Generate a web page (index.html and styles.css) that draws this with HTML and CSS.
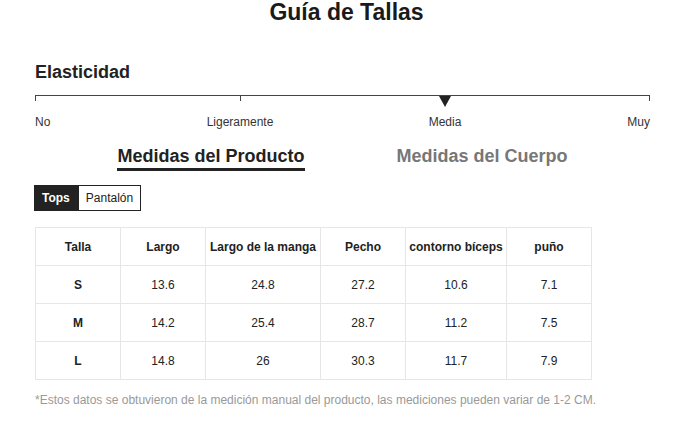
FILE: index.html
```html
<!DOCTYPE html>
<html lang="es">
<head>
<meta charset="utf-8">
<title>Guía de Tallas</title>
<link rel="stylesheet" href="styles.css">
</head>
<body>
<div class="page">
  <h1 class="title">Guía de Tallas</h1>
  <div class="content">
    <h2 class="section-title">Elasticidad</h2>
    <div class="scale">
      <div class="scale-track">
        <span class="seg"></span><span class="seg"></span><span class="seg seg-last"></span>
        <span class="marker" style="left: 66.667%"></span>
      </div>
      <div class="scale-labels">
        <span class="lbl lbl-start">No</span>
        <span class="lbl lbl-mid">Ligeramente</span>
        <span class="lbl lbl-mid">Media</span>
        <span class="lbl lbl-end">Muy</span>
      </div>
    </div>

    <div class="tabs">
      <span class="tab tab-active">Medidas del Producto</span>
      <span class="tab">Medidas del Cuerpo</span>
    </div>

    <div class="toggle">
      <span class="toggle-btn toggle-on">Tops</span>
      <span class="toggle-btn">Pantalón</span>
    </div>

    <table class="sizes">
      <colgroup>
        <col class="c85"><col class="c85"><col class="c115"><col class="c85"><col class="c101"><col class="c85">
      </colgroup>
      <thead>
        <tr><th>Talla</th><th>Largo</th><th>Largo de la manga</th><th>Pecho</th><th>contorno bíceps</th><th>puño</th></tr>
      </thead>
      <tbody>
        <tr><th>S</th><td>13.6</td><td>24.8</td><td>27.2</td><td>10.6</td><td>7.1</td></tr>
        <tr><th>M</th><td>14.2</td><td>25.4</td><td>28.7</td><td>11.2</td><td>7.5</td></tr>
        <tr><th>L</th><td>14.8</td><td>26</td><td>30.3</td><td>11.7</td><td>7.9</td></tr>
      </tbody>
    </table>

    <p class="note">*Estos datos se obtuvieron de la medición manual del producto, las mediciones pueden variar de 1-2 CM.</p>
  </div>
</div>
</body>
</html>
```

FILE: styles.css
```css
* { box-sizing: border-box; }
html, body { margin: 0; padding: 0; background: #fff; }
body {
  font-family: "Liberation Sans", Arial, sans-serif;
  color: #222;
  width: 693px;
}
.page { padding-top: 1px; }
.title {
  margin: 0;
  text-align: center;
  font-size: 23px;
  line-height: 22px;
  font-weight: 700;
  color: #1a1a1a;
}
.content {
  width: 615px;
  margin-left: 35px;
}
.section-title {
  margin: 40px 0 0;
  font-size: 18px;
  line-height: 18px;
  font-weight: 700;
  color: #222;
}
.scale { margin-top: 14px; }
.scale-track {
  position: relative;
  display: grid;
  grid-template-columns: repeat(3, 1fr);
  height: 6px;
  border-top: 1px solid #444;
}
.seg { border-left: 1px solid #444; }
.seg-last { border-right: 1px solid #444; }
.marker {
  position: absolute;
  top: 0;
  width: 0;
  height: 0;
  margin-left: -6px;
  border-left: 6px solid transparent;
  border-right: 6px solid transparent;
  border-top: 11px solid #222;
}
.scale-labels {
  display: grid;
  grid-template-columns: repeat(6, 1fr);
  margin-top: 14px;
  font-size: 12px;
  line-height: 14px;
  color: #333;
}
.lbl-start { grid-column: 1; text-align: left; }
.lbl-mid { grid-column: span 2; text-align: center; }
.lbl-end { grid-column: 6; text-align: right; }

.tabs {
  display: flex;
  justify-content: center;
  gap: 92px;
  margin-top: 17px;
}
.tab {
  font-size: 18px;
  line-height: 20px;
  font-weight: 700;
  color: #777;
  padding-bottom: 2px;
  border-bottom: 3px solid transparent;
}
.tab-active {
  color: #222;
  border-bottom-color: #222;
}

.toggle {
  display: flex;
  margin-top: 14px;
  margin-left: -1px;
}
.toggle-btn {
  display: flex;
  align-items: center;
  height: 26px;
  padding: 0 7px;
  font-size: 12px;
  border: 1px solid #222;
  background: #fff;
  color: #222;
}
.toggle-on {
  background: #222;
  color: #fff;
  font-weight: 700;
}

.sizes {
  border-collapse: collapse;
  table-layout: fixed;
  width: 556px;
  margin-top: 16px;
  font-size: 12px;
  color: #222;
}
.c85 { width: 85px; }
.c101 { width: 101px; }
.c115 { width: 115px; }
.sizes th, .sizes td {
  height: 38px;
  padding: 0;
  text-align: center;
  border: 1px solid #e6e6e6;
}
.sizes th { font-weight: 700; }
.sizes td { font-weight: 400; }

.note {
  margin: 13px 0 0;
  font-size: 12px;
  line-height: 14px;
  color: #999;
}
```
